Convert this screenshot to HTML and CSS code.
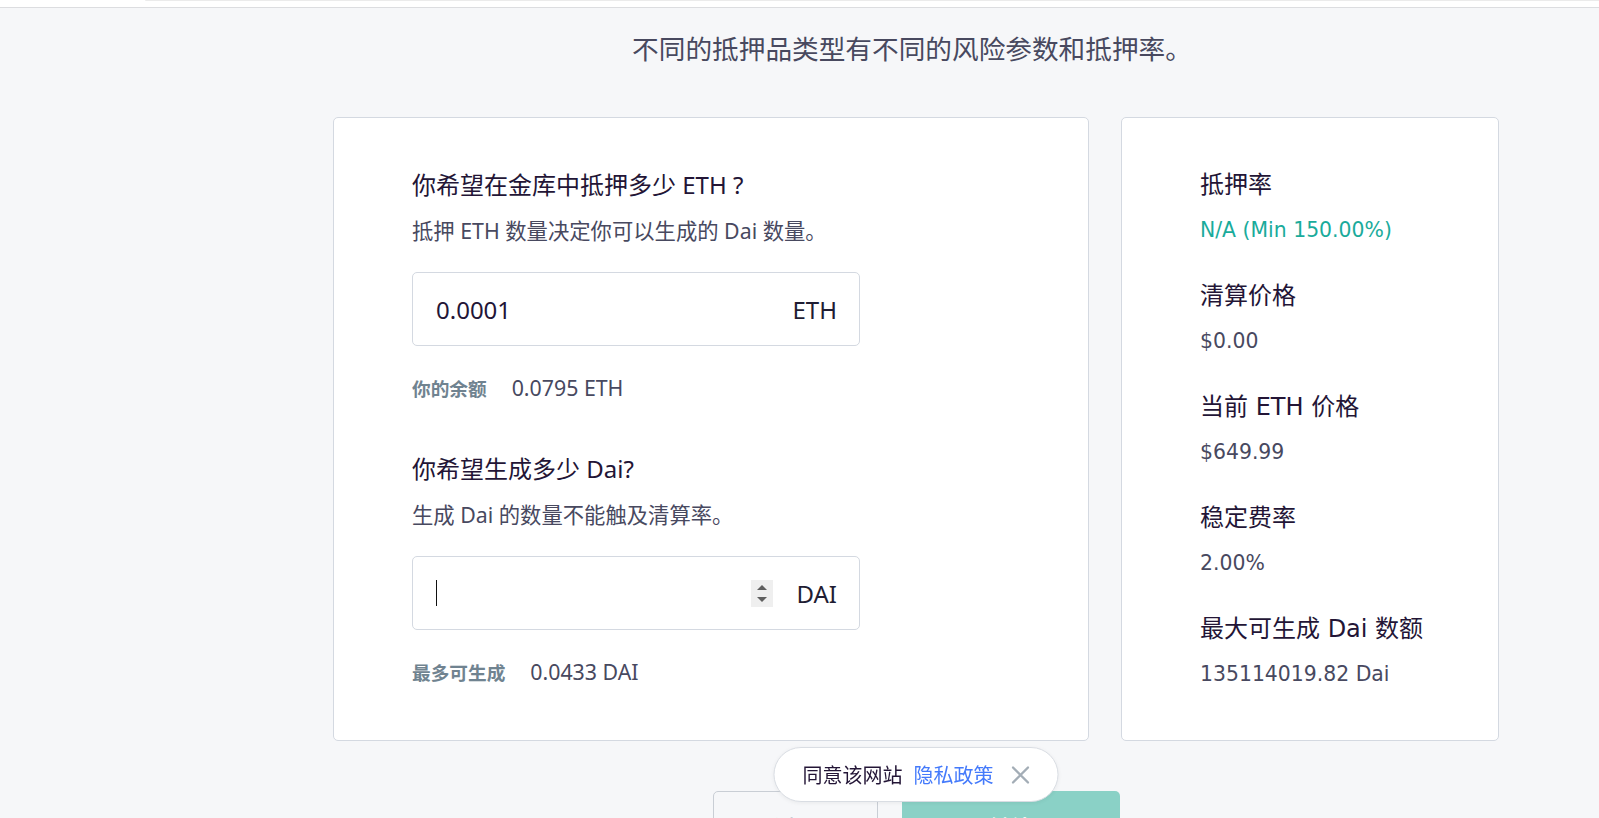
FILE: index.html
```html
<!DOCTYPE html>
<html>
  <head>
    <title>开设金库</title>
    <meta charset="UTF-8">
    <meta name="viewport" content="width=device-width, initial-scale=1">
    <link rel="stylesheet" href="styles.css">
  </head>
  <body>
    <div class="topbar">
      <div class="topbar-strip"></div>
    </div>

    <div class="main">
      <p class="intro">不同的抵押品类型有不同的风险参数和抵押率。</p>

      <div class="cards">
        <div class="card card-main">
          <p class="question">你希望在金库中抵押多少 ETH ?</p>
          <p class="hint">抵押 ETH 数量决定你可以生成的 Dai 数量。</p>
          <div class="amount">
            <span class="amount-value">0.0001</span>
            <span class="unit">ETH</span>
          </div>
          <div class="info-row">
            <span class="info-label">你的余额</span>
            <span class="info-value">0.0795 ETH</span>
          </div>

          <p class="question question-next">你希望生成多少 Dai?</p>
          <p class="hint">生成 Dai 的数量不能触及清算率。</p>
          <div class="amount">
            <span class="amount-value"><span class="caret"></span></span>
            <span class="spinner">
              <span class="arrow-up"></span>
              <span class="arrow-down"></span>
            </span>
            <span class="unit unit-dai">DAI</span>
          </div>
          <div class="info-row">
            <span class="info-label">最多可生成</span>
            <span class="info-value">0.0433 DAI</span>
          </div>
        </div>

        <div class="card card-side">
          <div class="stat">
            <div class="stat-label">抵押率</div>
            <div class="stat-value stat-good">N/A (Min 150.00%)</div>
          </div>
          <div class="stat">
            <div class="stat-label">清算价格</div>
            <div class="stat-value">$0.00</div>
          </div>
          <div class="stat">
            <div class="stat-label">当前 ETH 价格</div>
            <div class="stat-value">$649.99</div>
          </div>
          <div class="stat">
            <div class="stat-label">稳定费率</div>
            <div class="stat-value">2.00%</div>
          </div>
          <div class="stat">
            <div class="stat-label">最大可生成 Dai 数额</div>
            <div class="stat-value">135114019.82 Dai</div>
          </div>
        </div>
      </div>

      <div class="actions">
        <button class="btn btn-back">返回</button>
        <button class="btn btn-next" disabled>继续</button>
      </div>
    </div>

    <div class="cookie">
      <span>同意该网站</span>
      <a class="cookie-link" href="#">隐私政策</a>
      <svg class="cookie-close" width="18" height="18" viewBox="0 0 18 18">
        <path d="M1.5 1.5 L16.5 16.5 M16.5 1.5 L1.5 16.5" stroke="#a3adb6" stroke-width="2.4" stroke-linecap="round" fill="none"/>
      </svg>
    </div>
  </body>
</html>
```

FILE: styles.css
```css
/* page */
body {
	margin: 0;
	background-color: #f6f7f9;
	font-family: "Noto Sans", "Noto Sans CJK SC", sans-serif;
	color: #231536;
	overflow: hidden;
}
p {
	margin: 0;
}
.topbar {
	height: 7px;
	background-color: #fff;
	border-bottom: 1px solid #dcdde0;
}
.topbar-strip {
	margin-left: 145px;
	height: 1px;
	background-color: #ebebeb;
	border-bottom-left-radius: 2px;
}
.main {
	margin-left: 233px;
	display: flex;
	flex-direction: column;
	align-items: center;
}
.intro {
	margin: 21px 0 48px;
	padding-right: 8px;
	font-size: 26.67px;
	line-height: 40px;
	color: #48495f;
}

/* cards */
.cards {
	display: flex;
	gap: 32px;
	width: 1166px;
}
.card {
	flex: none;
	background-color: #fff;
	border: 1px solid #d4d9e1;
	border-radius: 5px;
	box-sizing: border-box;
}
.card-main {
	width: 756px;
	padding: 49px 78px 52px;
}
.card-side {
	width: 378px;
	padding: 49px 20px 48px 78px;
	font-family: "DejaVu Sans", "Noto Sans CJK SC", sans-serif;
}
.question {
	font-size: 24px;
	line-height: 36px;
	color: #231536;
}
.question-next {
	margin-top: 47px;
}
.hint {
	margin-top: 11px;
	font-size: 21.33px;
	line-height: 33px;
	color: #48495f;
}
.amount {
	display: flex;
	align-items: center;
	width: 448px;
	height: 74px;
	margin-top: 25px;
	padding: 0 22px 0 23px;
	border: 1px solid #d4d9e1;
	border-radius: 5px;
	box-sizing: border-box;
	font-size: 24px;
}
.amount-value {
	flex: 1;
	display: flex;
	align-items: center;
	color: #231536;
}
.caret {
	display: block;
	width: 1px;
	height: 26px;
	background-color: #111;
}
.spinner {
	display: flex;
	flex-direction: column;
	justify-content: center;
	align-items: center;
	gap: 7px;
	width: 22px;
	height: 27px;
	margin-right: 23px;
	background-color: #efefef;
}
.arrow-up, .arrow-down {
	width: 0;
	height: 0;
	border-left: 5.5px solid transparent;
	border-right: 5.5px solid transparent;
}
.arrow-up {
	border-bottom: 5px solid #5f5f5f;
}
.arrow-down {
	border-top: 5px solid #5f5f5f;
}
.unit {
	color: #1f1d33;
}
.info-row {
	display: flex;
	align-items: baseline;
	gap: 25px;
	margin-top: 27px;
	line-height: 30px;
}
.info-label {
	font-size: 18.67px;
	font-weight: bold;
	color: #708390;
}
.info-value {
	font-size: 21.33px;
	color: #48495f;
}

/* side stats */
.stat + .stat {
	margin-top: 31px;
}
.stat-label {
	font-size: 24px;
	line-height: 36px;
	color: #231536;
}
.stat-value {
	margin-top: 11px;
	font-size: 20.4px;
	line-height: 33px;
	color: #48495f;
}
.stat-good {
	color: #1aab9b;
}

/* buttons */
.actions {
	display: flex;
	gap: 24px;
	margin-top: 50px;
}
.btn {
	height: 70px;
	border-radius: 5px;
	font-family: inherit;
	font-size: 21.33px;
	font-weight: bold;
}
.btn-back {
	width: 165px;
	background-color: transparent;
	border: 1px solid #c9ced5;
	color: #708390;
}
.btn-next {
	width: 218px;
	background-color: #8ad1c6;
	border: none;
	color: #fff;
}

/* cookie notice */
.cookie {
	position: fixed;
	bottom: 16px;
	left: calc(233px + (100% - 233px) / 2);
	transform: translateX(-50%);
	display: flex;
	align-items: center;
	height: 55px;
	padding: 0 28px 0 28px;
	background-color: #fff;
	border: 1px solid #d9dde3;
	border-radius: 28px;
	box-sizing: border-box;
	box-shadow: 0 1px 4px rgba(0, 0, 0, 0.06);
	font-size: 20px;
	color: #231536;
	white-space: nowrap;
}
.cookie-link {
	margin-left: 11px;
	color: #447afb;
	text-decoration: none;
}
.cookie-close {
	margin-left: 18px;
}
```
